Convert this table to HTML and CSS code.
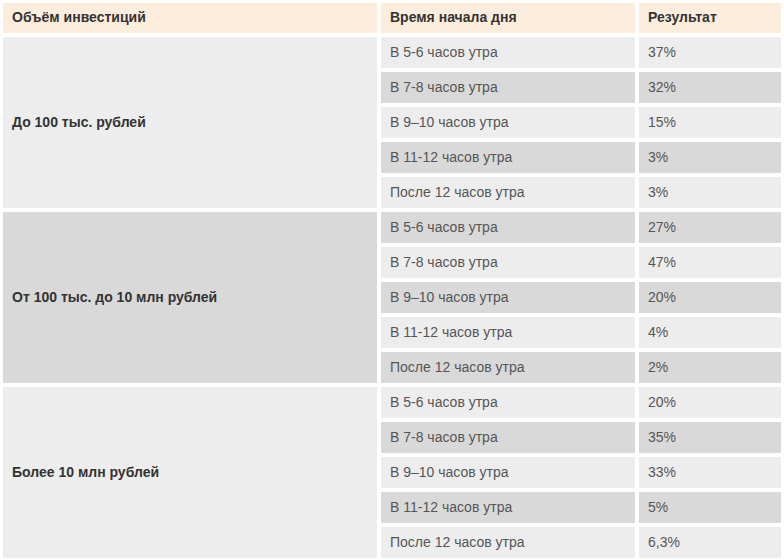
FILE: index.html
```html
<!DOCTYPE html>
<html lang="ru">
<head>
<meta charset="utf-8">
<link rel="stylesheet" href="styles.css">
</head>
<body>
<div class="table">
  <div class="cell head">Объём инвестиций</div>
  <div class="cell head">Время начала дня</div>
  <div class="cell head">Результат</div>

  <div class="cell group light">До 100 тыс. рублей</div>
  <div class="cell light">В 5-6 часов утра</div><div class="cell light">37%</div>
  <div class="cell dark">В 7-8 часов утра</div><div class="cell dark">32%</div>
  <div class="cell light">В 9–10 часов утра</div><div class="cell light">15%</div>
  <div class="cell dark">В 11-12 часов утра</div><div class="cell dark">3%</div>
  <div class="cell light">После 12 часов утра</div><div class="cell light">3%</div>

  <div class="cell group dark">От 100 тыс. до 10 млн рублей</div>
  <div class="cell dark">В 5-6 часов утра</div><div class="cell dark">27%</div>
  <div class="cell light">В 7-8 часов утра</div><div class="cell light">47%</div>
  <div class="cell dark">В 9–10 часов утра</div><div class="cell dark">20%</div>
  <div class="cell light">В 11-12 часов утра</div><div class="cell light">4%</div>
  <div class="cell dark">После 12 часов утра</div><div class="cell dark">2%</div>

  <div class="cell group light">Более 10 млн рублей</div>
  <div class="cell light">В 5-6 часов утра</div><div class="cell light">20%</div>
  <div class="cell dark">В 7-8 часов утра</div><div class="cell dark">35%</div>
  <div class="cell light">В 9–10 часов утра</div><div class="cell light">33%</div>
  <div class="cell dark">В 11-12 часов утра</div><div class="cell dark">5%</div>
  <div class="cell light">После 12 часов утра</div><div class="cell light">6,3%</div>
</div>
</body>
</html>
```
FILE: styles.css
```css
html, body {
  margin: 0;
  padding: 0;
  background: #ffffff;
}
body {
  font-family: "Liberation Sans", Arial, sans-serif;
  font-size: 14px;
  color: #555555;
}
.table {
  display: grid;
  grid-template-columns: 374px 254px 142px;
  grid-template-rows: 30px;
  grid-auto-rows: 31px;
  gap: 4px;
  padding: 3px;
}
.cell {
  display: flex;
  align-items: center;
  padding-left: 9px;
  padding-bottom: 2px;
  white-space: nowrap;
}
.head {
  background: #fdeddd;
  color: #333333;
  font-weight: bold;
}
.group {
  grid-row: span 5;
  color: #333333;
  font-weight: bold;
}
.light {
  background: #ededed;
}
.dark {
  background: #d9d9d9;
}
```
